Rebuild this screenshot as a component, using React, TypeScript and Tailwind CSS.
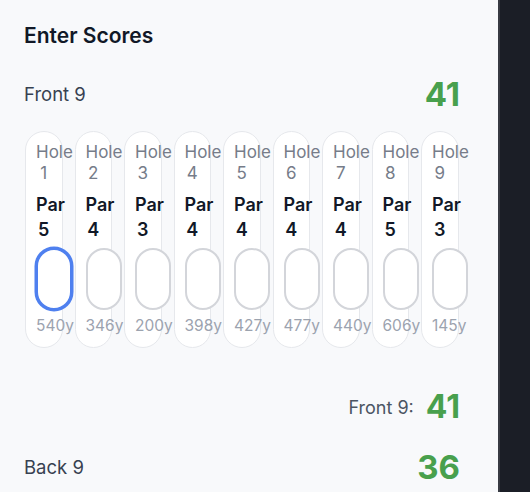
import { useState } from 'react';

interface Hole {
  number: number;
  par: number;
  yards: number;
}

const frontNine: Hole[] = [
  { number: 1, par: 5, yards: 540 },
  { number: 2, par: 4, yards: 346 },
  { number: 3, par: 3, yards: 200 },
  { number: 4, par: 4, yards: 398 },
  { number: 5, par: 4, yards: 427 },
  { number: 6, par: 4, yards: 477 },
  { number: 7, par: 4, yards: 440 },
  { number: 8, par: 5, yards: 606 },
  { number: 9, par: 3, yards: 145 },
];

function HoleCard({ hole, focused }: { hole: Hole; focused: boolean }) {
  const [value, setValue] = useState('');
  return (
    <div className="w-[37.5px] shrink-0 rounded-full border border-[#e6e8ec] bg-white px-[10px] pt-[10px] pb-[11px] text-center">
      <div className="text-[17px] leading-[21px] text-[#767c89]">Hole {hole.number}</div>
      <div className="mt-[8px] text-[18px] leading-[25px] font-semibold text-[#111827]">Par {hole.par}</div>
      <input
        value={value}
        onChange={(e) => setValue(e.target.value)}
        className={
          focused
            ? 'mt-[6px] block h-[62px] w-[36px] rounded-full border-2 border-[#4f80ef] ring-[1.5px] ring-[#4f80ef] bg-white text-center outline-none'
            : 'mt-[6px] block h-[62px] w-[36px] rounded-full border-2 border-[#d3d5da] bg-white text-center outline-none'
        }
      />
      <div className="mt-[6px] text-[15.5px] leading-5 text-[#9ca3af]">{hole.yards}y</div>
    </div>
  );
}

export default function App() {
  return (
    <div className="flex h-[492px] w-[530px] overflow-hidden font-['Inter',sans-serif]">
      <div className="w-[498px] shrink-0 bg-[#f8f9fb] pl-6 pt-[22px]">
        <div className="w-[436px]">
          <h2 className="text-[21px] leading-7 font-semibold text-[#111827]">Enter Scores</h2>

          {/* Front 9 header */}
          <div className="mt-[27px] flex h-9 items-center justify-between">
            <span className="text-[18.5px] text-[#374151]">Front 9</span>
            <span className="text-[33px] font-bold text-[#48a04d]">41</span>
          </div>

          {/* Hole cards */}
          <div className="mt-[18px] ml-px flex gap-3">
            {frontNine.map((hole) => (
              <HoleCard key={hole.number} hole={hole} focused={hole.number === 1} />
            ))}
          </div>

          {/* Subtotal */}
          <div className="mt-[41px] flex h-9 items-center justify-end gap-3">
            <span className="text-[18px] text-[#4b5563]">Front 9:</span>
            <span className="text-[32px] font-bold text-[#48a04d]">41</span>
          </div>

          {/* Back 9 header */}
          <div className="mt-[25px] flex h-9 items-center justify-between">
            <span className="text-[18.5px] text-[#374151]">Back 9</span>
            <span className="text-[33px] font-bold text-[#48a04d]">36</span>
          </div>
        </div>
      </div>
      <div className="w-[2px] shrink-0 bg-[#383b43]" />
      <div className="flex-1 bg-[#1b1e26]" />
    </div>
  );
}
